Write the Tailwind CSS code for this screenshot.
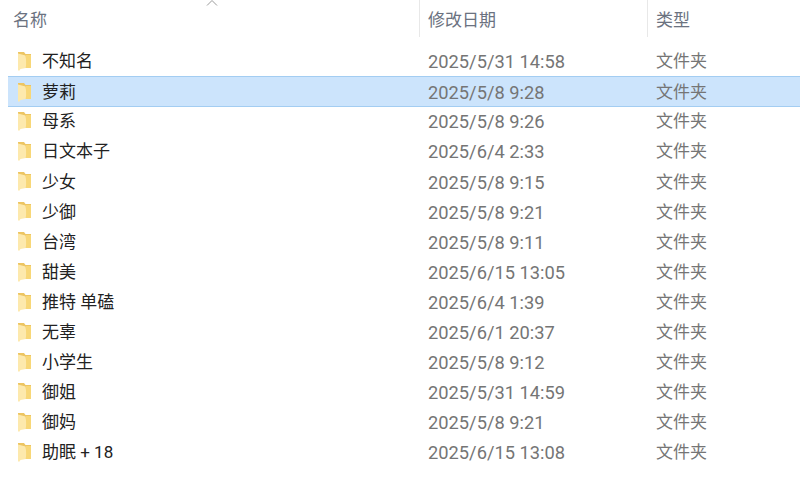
<!DOCTYPE html>
<html lang="zh-CN">
<head>
  <meta charset="UTF-8" />
  <title>文件夹</title>
  <script src="https://cdn.jsdelivr.net/npm/@tailwindcss/browser@4"></script>
</head>
<body class="bg-white w-[800px] h-[481px] overflow-hidden font-['Roboto','Noto_Sans_CJK_SC',sans-serif] text-[17px]">

  <!-- header -->
  <div class="relative flex h-[37px] text-[#6b7280]">
    <svg class="absolute left-[206px] top-0" width="12" height="6" viewBox="0 0 12 6" fill="none" stroke="#9a9a9a" stroke-width="1"><path d="M1 5.500 L6 0.500 L11 5.500" /></svg>
    <div class="w-[420px] pl-[13px] pt-[8px] border-r border-[#e8e8e8]">名称</div>
    <div class="w-[228px] pl-[8px] pt-[8px] border-r border-[#e8e8e8] text-[17px]">修改日期</div>
    <div class="pl-[8px] pt-[8px]">类型</div>
  </div>

  <!-- rows -->
  <div id="rows" class="pt-[9px] pl-[8px]"></div>

  <script>
    const folders = [
      ["不知名", "2025/5/31 14:58"],
      ["萝莉", "2025/5/8 9:28"],
      ["母系", "2025/5/8 9:26"],
      ["日文本子", "2025/6/4 2:33"],
      ["少女", "2025/5/8 9:15"],
      ["少御", "2025/5/8 9:21"],
      ["台湾", "2025/5/8 9:11"],
      ["甜美", "2025/6/15 13:05"],
      ["推特 单磕", "2025/6/4 1:39"],
      ["无辜", "2025/6/1 20:37"],
      ["小学生", "2025/5/8 9:12"],
      ["御姐", "2025/5/31 14:59"],
      ["御妈", "2025/5/8 9:21"],
      ["助眠 + 18", "2025/6/15 13:08"],
    ];
    const icon = `<svg class="w-[16px] h-[20px] shrink-0" viewBox="0 0 16 20"><path d="M1 1h6l1.500 2h5.500v14H1z" fill="#edc562"/><path d="M9 4h5v13H9z" fill="#f8d777"/><path d="M1 2.500l7.500 2c.8 4 .8 8.500 .3 12.500L3.500 18 2 20 1 19z" fill="#fde9ad"/></svg>`;
    document.getElementById("rows").innerHTML = folders.map(([name, date], i) => `
      <div class="flex items-center pl-[9px] ${i === 1 ? "h-[31px] -mb-px bg-[#cce4fc] border-y border-[#a3cdf2]" : "h-[30.08px]"}">
        ${icon}
        <div class="w-[395px] pl-[9px] pt-[2px] text-[#222]">${name}</div>
        <div class="w-[228px] pt-[2px] text-[18.3px] text-[#757575]">${date}</div>
        <div class="pt-[2px] text-[#757575]">文件夹</div>
      </div>`).join("");
  </script>

</body>
</html>
